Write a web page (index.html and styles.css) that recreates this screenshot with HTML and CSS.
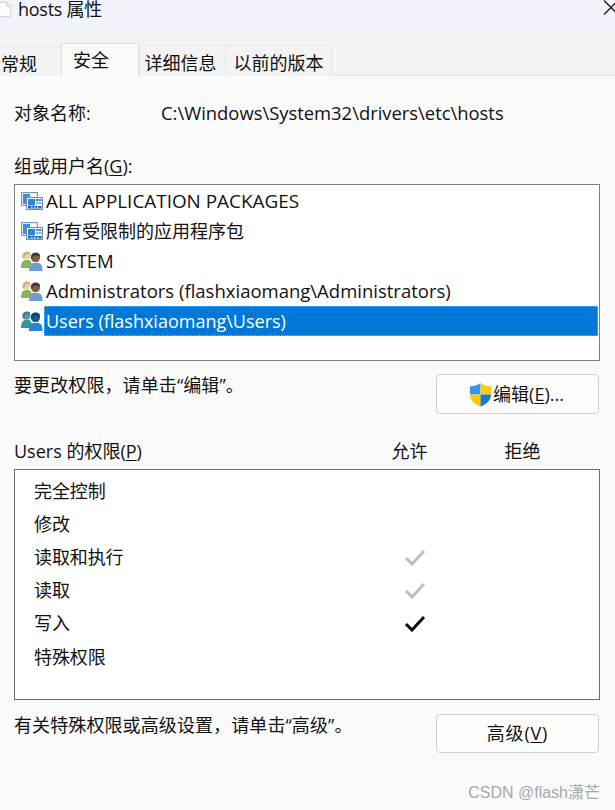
FILE: index.html
```html
<!DOCTYPE html>
<html lang="zh-CN">
<head>
<meta charset="utf-8">
<title>hosts 属性</title>
<link rel="stylesheet" href="styles.css">
</head>
<body>
<svg class="defs" width="0" height="0" aria-hidden="true">
  <defs>
    <symbol id="pkg" viewBox="0 0 22 18">
      <rect x="0.5" y="0.5" width="16" height="13" fill="#dfe9f4" stroke="#7f98b0"/>
      <rect x="2" y="2" width="7" height="10" fill="#3d8fdc"/>
      <rect x="10" y="2" width="5.500" height="10" fill="#f4f8fc"/>
      <rect x="5.500" y="5.500" width="16" height="12" fill="#f4f8fc" stroke="#6f8ba6"/>
      <rect x="7" y="7" width="7" height="6.500" fill="#2b86dc"/>
      <rect x="15" y="7" width="2.500" height="2" fill="#2b86dc"/>
      <rect x="18" y="7" width="2.500" height="2" fill="#2b86dc"/>
      <rect x="15" y="10" width="2.500" height="2" fill="#7db5ea"/>
      <rect x="18" y="10" width="2.500" height="2" fill="#7db5ea"/>
      <rect x="7" y="14" width="13.500" height="2.500" fill="#1769b8"/>
      <rect x="10" y="14.700" width="1.500" height="1" fill="#fff"/>
      <rect x="13" y="14.700" width="1.500" height="1" fill="#fff"/>
      <rect x="16" y="14.700" width="1.500" height="1" fill="#fff"/>
    </symbol>
    <symbol id="admins" viewBox="0 0 22 20">
      <path d="M0 17c0-6 2-8 5-8h2c3 0 4 2 4 8z" fill="#8db35a"/>
      <circle cx="5.500" cy="4.800" r="4" fill="#ecd2a6"/>
      <path d="M1.500 6C0.500 0 10 -1.500 9.500 3.500 7 2 4 3 3.500 6.500 3 8 2 8 1.500 6z" fill="#cdb07c"/>
      <path d="M8 20c0-6 2-8 5-8h3c4 0 5.500 2 5.500 8z" fill="#6d9dd0"/>
      <circle cx="14.500" cy="6.800" r="4.500" fill="#8a5c3e"/>
      <path d="M10 7c-1-7 10-7 9-1-3-2-6-2-7 0-.5 2-1.500 2-2 1z" fill="#3a3a40"/>
    </symbol>
    <symbol id="users" viewBox="0 0 22 20">
      <path d="M0 17c0-6 2-8 5-8h2c3 0 4 2 4 8z" fill="#2f9a9c"/>
      <circle cx="5.500" cy="4.800" r="4" fill="#5d93a8"/>
      <path d="M1.500 6C0.500 0 10 -1.500 9.500 3.500 7 2 4 3 3.500 6.500 3 8 2 8 1.500 6z" fill="#3e7d96"/>
      <path d="M8 20c0-6 2-8 5-8h3c4 0 5.500 2 5.500 8z" fill="#2b82d2"/>
      <circle cx="14.500" cy="6.800" r="4.500" fill="#1f5a8c"/>
      <path d="M10 7c-1-7 10-7 9-1-3-2-6-2-7 0-.5 2-1.500 2-2 1z" fill="#123f68"/>
    </symbol>
    <symbol id="check" viewBox="0 0 22 18">
      <path d="M2 10l6 6L20 3" fill="none" stroke="currentColor" stroke-width="3"/>
    </symbol>
  </defs>
</svg>

<header class="title">
  <svg class="file-icon" viewBox="0 0 16 22" aria-hidden="true">
    <path d="M-4 0.500h14l5.500 5.500v15.500h-19.500z" fill="#fdfdfd" stroke="#b9b9b9"/>
    <path d="M10 0.500v5.500h5.500" fill="#eee" stroke="#b9b9b9"/>
  </svg>
  <span class="title-text">hosts 属性</span>
  <svg class="close" viewBox="0 0 12 16" aria-hidden="true">
    <path d="M1 0.500L15 14.500M15 0.500L1 14.500" fill="none" stroke="#222" stroke-width="1.500"/>
  </svg>
</header>

<nav class="tabs">
  <span class="tab tab-first">常规</span>
  <span class="tab tab-active">安全</span>
  <span class="tab tab-details">详细信息</span>
  <span class="tab tab-prev">以前的版本</span>
</nav>

<main class="page">
  <div class="object-row">
    <span class="object-label">对象名称:</span>
    <span class="object-path">C:\Windows\System32\drivers\etc\hosts</span>
  </div>

  <div class="group-label">组或用户名(<u>G</u>):</div>
  <ul class="list">
    <li class="list-row"><svg class="row-icon"><use href="#pkg"/></svg><span class="row-text row-caps">ALL APPLICATION PACKAGES</span></li>
    <li class="list-row"><svg class="row-icon"><use href="#pkg"/></svg><span class="row-text">所有受限制的应用程序包</span></li>
    <li class="list-row"><svg class="row-icon row-people"><use href="#admins"/></svg><span class="row-text row-system">SYSTEM</span></li>
    <li class="list-row"><svg class="row-icon row-people"><use href="#admins"/></svg><span class="row-text row-long">Administrators (flashxiaomang\Administrators)</span></li>
    <li class="list-row"><svg class="row-icon row-people"><use href="#users"/></svg><span class="row-text selected">Users (flashxiaomang\Users)</span></li>
  </ul>

  <div class="action-row edit-row">
    <span class="hint">要更改权限，请单击“编辑”。</span>
    <button class="btn btn-edit" type="button">
      <svg class="shield" viewBox="0 0 24 26" aria-hidden="true">
        <path d="M12 1C9 3.500 5 4.500 1 4.500V13h11z" fill="#2f9be8"/>
        <path d="M12 1c3 2.500 7 3.500 11 3.500V13H12z" fill="#ffc90e"/>
        <path d="M1 13c0 6 5 10.500 11 12.500V13z" fill="#ffc90e"/>
        <path d="M23 13c0 6-5 10.500-11 12.500V13z" fill="#1e78c8"/>
      </svg><span>编辑(<u>E</u>)...</span>
    </button>
  </div>

  <div class="perm-head">
    <span class="perm-name">Users 的权限(<u>P</u>)</span>
    <span class="perm-col">允许</span>
    <span class="perm-col">拒绝</span>
  </div>
  <ul class="perm-list">
    <li class="perm-row"><span class="perm-name">完全控制</span></li>
    <li class="perm-row"><span class="perm-name">修改</span></li>
    <li class="perm-row"><span class="perm-name">读取和执行</span><svg class="check check-off"><use href="#check"/></svg></li>
    <li class="perm-row"><span class="perm-name">读取</span><svg class="check check-off"><use href="#check"/></svg></li>
    <li class="perm-row"><span class="perm-name">写入</span><svg class="check check-on"><use href="#check"/></svg></li>
    <li class="perm-row"><span class="perm-name">特殊权限</span></li>
  </ul>

  <div class="action-row adv-row">
    <span class="hint">有关特殊权限或高级设置，请单击“高级”。</span>
    <button class="btn btn-adv" type="button"><span>高级(<u>V</u>)</span></button>
  </div>
</main>

<div class="watermark">CSDN @flash潇芒</div>
</body>
</html>
```
FILE: styles.css
```css
* { box-sizing: border-box; }
html, body { margin: 0; padding: 0; }
body {
  width: 615px;
  height: 810px;
  overflow: hidden;
  position: relative;
  background: #fafafa;
  color: #111;
  font: 18px/24px "Open Sans", "Noto Sans CJK SC", sans-serif;
}
.defs { position: absolute; }
u { text-underline-offset: 2px; text-decoration-thickness: 1px; }

.title {
  height: 31px;
  background: #f2f4fb;
  display: flex;
  align-items: flex-start;
  overflow: hidden;
}
.file-icon { width: 11px; height: 19px; flex: none; }
.title-text { margin-left: 7px; line-height: 18px; font-size: 18px; letter-spacing: -0.25px; }
.close { width: 12px; height: 16px; margin-left: auto; flex: none; }

.tabs {
  height: 45px;
  background: #f3f3f3;
  border-bottom: 1px solid #e4e4e4;
  display: flex;
  align-items: flex-end;
}
.tab {
  height: 31px;
  background: #f3f3f3;
  border: 1px solid #e6e6e6;
  border-bottom: 0;
  display: flex;
  align-items: center;
  justify-content: center;
  margin-bottom: -1px;
}
.tab-first { width: 61px; justify-content: flex-start; padding-left: 1px; border-left: 0; border-right: 0; height: 30px; padding-top: 4px; }
.tab-active {
  width: 78px;
  height: 33px;
  background: #fafafa;
  border-color: #e0e0e0;
  justify-content: flex-start;
  padding: 0 0 1px 11px;
}
.tab-details { width: 87px; padding: 4px 4px 0 0; }
.tab-prev { width: 106px; padding-top: 4px; border-left: 0; }

.page { padding: 25px 15px 0 14px; }
.object-row { display: flex; height: 24px; }
.object-label { width: 147px; }
.object-path { font-size: 18.400px; }
.group-label { margin-top: 29px; height: 24px; }

.list {
  list-style: none;
  margin: 6px 0 0;
  width: 586px;
  height: 177px;
  background: #fff;
  border: 1px solid #7f7f7f;
  padding: 1px 1px 0 0;
}
.list-row { display: flex; height: 30px; align-items: center; padding-left: 6px; }
.row-icon { width: 22px; height: 18px; margin-right: 1px; flex: none; }
.row-people { height: 20px; }
.row-text { flex: 1; height: 30px; line-height: 30px; padding-left: 2px; white-space: nowrap; }
.row-caps { font-size: 18.900px; }
.row-system { font-size: 18.500px; }
.row-long { font-size: 18.500px; }
.selected { background: #0078d7; color: #fff; outline: 1px dotted #f0a040; outline-offset: -1px; }

.action-row { display: flex; align-items: flex-start; justify-content: space-between; width: 585px; }
.hint { letter-spacing: 0.1px; margin-top: -1px; }
.edit-row { margin-top: 13px; height: 40px; }
.adv-row { margin-top: 14px; height: 39px; }
.btn {
  width: 163px;
  height: 40px;
  background: #fdfdfd;
  border: 1px solid #d0d0d0;
  border-radius: 4px;
  font: inherit;
  color: inherit;
  padding: 0;
  display: flex;
  align-items: center;
  justify-content: center;
}
.btn-edit { padding-right: 2px; }
.btn-adv { height: 39px; padding-bottom: 2px; letter-spacing: 0.8px; }
.shield { width: 23px; height: 25px; margin-right: 1px; flex: none; }

.perm-head { display: flex; margin-top: 25px; height: 24px; width: 586px; }
.perm-name { flex: 1; }
.perm-head .perm-col { flex: none; width: 113px; text-align: center; }
.perm-head .perm-col:last-child { margin-right: 21px; }

.perm-list {
  list-style: none;
  margin: 6px 0 0;
  padding: 4px 0 0 19px;
  width: 586px;
  height: 231px;
  background: #fff;
  border: 1px solid #6e6e6e;
}
.perm-row { height: 33.200px; display: flex; align-items: center; padding-right: 173px; }
.perm-row .perm-name { letter-spacing: -0.1px; }
.check { width: 22px; height: 18px; flex: none; }
.check-off { color: #bdbdbd; }
.check-on { color: #0a0a0a; }

.watermark {
  position: absolute;
  right: 15px;
  bottom: 7px;
  font: 16px/20px "Liberation Sans", "Noto Sans CJK SC", sans-serif;
  color: #a8a8a8;
}
```
